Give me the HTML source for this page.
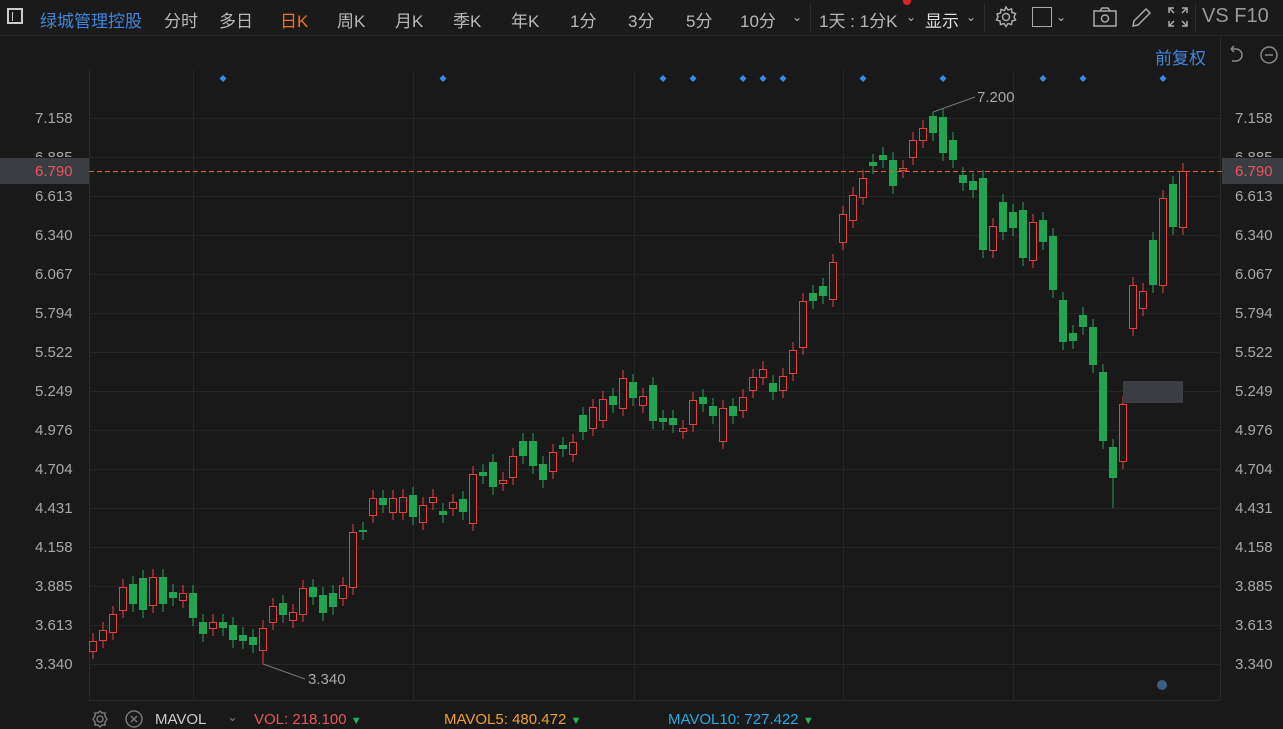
<!DOCTYPE html>
<html><head><meta charset="utf-8"><style>
body{margin:0;width:1283px;height:727px;background:#191919;overflow:hidden;font-family:"Liberation Sans","Noto Sans CJK SC",sans-serif;position:relative;color:#bbb}
.top{position:absolute;left:0;top:0;width:1283px;height:35px;border-bottom:1px solid #252525;background:#1a1a1a}
.t{position:absolute;top:7px;font-size:17px;color:#b8b8b8;white-space:nowrap}
.lbl{position:absolute;font-size:15px;color:#a8a8a8}
.sep{position:absolute;top:4px;width:1px;height:28px;background:#2c2c2c}
</style></head><body>
<div class="top">
<div style="position:absolute;left:7px;top:8px;width:16px;height:16px;border:2px solid #ccc;box-sizing:border-box"><div style="position:absolute;left:3px;top:2px;width:1px;height:9px;background:#ccc"></div></div>
<div class="t" style="left:40px;color:#3f86d8">绿城管理控股</div>
<div class="t" style="left:164px">分时</div>
<div class="t" style="left:219px">多日</div>
<div class="t" style="left:280px;color:#f07020">日K</div>
<div class="t" style="left:337px">周K</div>
<div class="t" style="left:395px">月K</div>
<div class="t" style="left:453px">季K</div>
<div class="t" style="left:511px">年K</div>
<div class="t" style="left:570px">1分</div>
<div class="t" style="left:628px">3分</div>
<div class="t" style="left:686px">5分</div>
<div class="t" style="left:740px">10分</div>
<div class="t" style="left:792px;font-size:12px;top:10px">⌄</div>
<div class="sep" style="left:810px"></div>
<div class="t" style="left:819px">1天 : 1分K</div>
<div class="t" style="left:906px;font-size:12px;top:10px">⌄</div>
<div style="position:absolute;left:903px;top:-3px;width:8px;height:8px;border-radius:50%;background:#e02030"></div>
<div class="t" style="left:925px;color:#ddd">显示</div>
<div class="t" style="left:966px;font-size:12px;top:10px">⌄</div>
<div class="sep" style="left:984px"></div>
<svg style="position:absolute;left:994px;top:5px" width="24" height="24" viewBox="0 0 24 24" fill="none" stroke="#aaa" stroke-width="1.5"><circle cx="12" cy="12" r="3.5"/><path d="M12 2l2 3 3.5-1 .5 3.5 3.5 1-1.5 3.5 1.5 3-3.5 1-.5 3.5-3.5-1-2 3-2-3-3.5 1-.5-3.5-3.5-1 1.5-3.5L3 9l3.5-1L7 4.5l3.5 1z"/></svg>
<div style="position:absolute;left:1032px;top:7px;width:20px;height:20px;border:1.5px solid #aaa;box-sizing:border-box"></div>
<div class="t" style="left:1056px;font-size:12px;top:10px">⌄</div>
<svg style="position:absolute;left:1092px;top:6px" width="26" height="22" viewBox="0 0 26 22" fill="none" stroke="#aaa" stroke-width="1.5"><rect x="2" y="5" width="22" height="15"/><path d="M8 5l2-3h6l2 3"/><circle cx="13" cy="12.5" r="3.5"/></svg>
<svg style="position:absolute;left:1129px;top:6px" width="24" height="22" viewBox="0 0 24 22" fill="none" stroke="#aaa" stroke-width="1.5"><path d="M4 20l1-5L17 3l4 4L9 19z"/></svg>
<svg style="position:absolute;left:1166px;top:6px" width="24" height="22" viewBox="0 0 24 22" fill="none" stroke="#aaa" stroke-width="1.5"><path d="M3 7V2h5M16 2h5v5M21 15v5h-5M8 20H3v-5M3 2l5 5M21 2l-5 5M21 20l-5-5M3 20l5-5"/></svg>
<div class="sep" style="left:1195px"></div>
<div class="t" style="left:1202px;font-size:20px;top:5px;color:#999">VS F10</div>
</div>
<div class="t" style="left:1155px;top:44px;color:#3f86d8">前复权</div>
<svg style="position:absolute;left:1227px;top:45px" width="52" height="20" viewBox="0 0 52 20" fill="none" stroke="#888" stroke-width="1.5"><path d="M4 4h5a6 6 0 1 1 0 12H5M4 4l3-3M4 4l3 3"/><circle cx="42" cy="10" r="8"/><path d="M38 10h8"/></svg>
<svg id="c" style="position:absolute;left:0;top:0" width="1283" height="727"></svg>
<div style="position:absolute;left:0;top:158px;width:89px;height:26px;background:#3a3e42"></div>
<div style="position:absolute;left:1222px;top:158px;width:61px;height:26px;background:#3a3e42"></div>
<div style="position:absolute;left:1123px;top:381px;width:60px;height:22px;background:#3a3e42"></div>
<div id="labels"></div>
<svg style="position:absolute;left:90px;top:709px" width="20" height="20" viewBox="0 0 20 20" fill="none" stroke="#777" stroke-width="1.5"><circle cx="10" cy="10" r="3"/><path d="M10 2l2 2h3v3l2 3-2 3v3h-3l-2 2-2-2H5v-3l-2-3 2-3V4h3z"/></svg>
<svg style="position:absolute;left:124px;top:709px" width="20" height="20" viewBox="0 0 20 20" fill="none" stroke="#777" stroke-width="1.5"><circle cx="10" cy="10" r="8"/><path d="M7 7l6 6M13 7l-6 6"/></svg>
<div class="lbl" style="left:155px;top:711px;color:#ccc">MAVOL</div>
<div class="lbl" style="left:227px;top:709px;color:#777;font-size:13px">⌄</div>
<div class="lbl" style="left:254px;top:711px;color:#e8555a">VOL: 218.100 <span style="color:#2bb05a;font-size:11px">▼</span></div>
<div class="lbl" style="left:444px;top:711px;color:#f0a030">MAVOL5: 480.472 <span style="color:#2bb05a;font-size:11px">▼</span></div>
<div class="lbl" style="left:668px;top:711px;color:#2da8e0">MAVOL10: 727.422 <span style="color:#2bb05a;font-size:11px">▼</span></div>
<script>
const svg=document.getElementById('c');let h='';
const ys=[[118,'7.158'],[157,'6.885'],[196,'6.613'],[235,'6.340'],[274,'6.067'],[313,'5.794'],[352,'5.522'],[391,'5.249'],[430,'4.976'],[469,'4.704'],[508,'4.431'],[547,'4.158'],[586,'3.885'],[625,'3.613'],[664,'3.340']];
ys.forEach(([y])=>h+=`<line x1="89" x2="1220" y1="${y+.5}" y2="${y+.5}" stroke="#262626"/>`);
[193,413,634,843,1013].forEach(x=>h+=`<line x1="${x+.5}" x2="${x+.5}" y1="70" y2="700" stroke="#262626"/>`);
h+=`<line x1="89.5" x2="89.5" y1="70" y2="700" stroke="#2a2a2a"/><line x1="1220.5" x2="1220.5" y1="36" y2="700" stroke="#2a2a2a"/><line x1="89" x2="1220" y1="700.5" y2="700.5" stroke="#2a2a2a"/>`;
let L='';
ys.forEach(([y,t])=>{if(t!=='6.885'){L+=`<div class="lbl" style="left:35px;top:${y-8}px">${t}</div><div class="lbl" style="left:1235px;top:${y-8}px">${t}</div>`}else{L+=`<div class="lbl" style="left:35px;top:${y-8}px;height:8px;overflow:hidden">${t}</div><div class="lbl" style="left:1235px;top:${y-8}px;height:8px;overflow:hidden">${t}</div>`}});
L+=`<div class="lbl" style="left:35px;top:163px;color:#f05060">6.790</div><div class="lbl" style="left:1235px;top:163px;color:#f05060">6.790</div>`;
L+=`<div class="lbl" style="left:977px;top:89px">7.200</div><div class="lbl" style="left:308px;top:671px">3.340</div>`;
document.getElementById('labels').innerHTML=L;
const d=`r641-651 r630-640 r614-632 r587-610 g584-604 g578-610 r577-605 g577-604 g592-598 r593-600 g593-618 g622-634 r622-628 g622-628 g625-640 g635-641 g637-645 r628-650 r606-622 g603-615 r612-620 r588-614 g587-597 g595-613 g593-607 r585-598 r532-587 g530-532 r498-515 g498-505 r498-512 r497-512 g495-517 r505-522 r497-502 g511-515 r502-508 g499-512 r474-523 g472-476 g462-487 r480-483 r456-477 g441-456 g441-466 g464-480 r452-471 g445-449 r442-454 g415-432 r407-428 r399-420 g396-405 r378-408 g382-398 r396-405 g385-421 g418-422 g418-425 r428-431 r400-424 g397-404 g406-416 r408-441 g406-416 r397-410 r377-390 r369-377 g383-392 r376-390 r350-373 r301-347 g293-301 g286-296 r262-299 r214-242 r195-220 r178-197 g162-166 g155-160 g160-186 r168-170 r140-157 r128-140 g116-133 g117-153 g140-160 g175-183 g181-190 g178-250 r226-250 g202-232 g212-228 g210-258 r222-260 g220-242 g236-290 g300-342 g333-341 g315-327 g327-365 g372-441 g447-478 r404-461 r285-328 r291-308 g240-285 r198-285 g184-227 r171-227`.split(' ');
d.forEach((s,i)=>{const x=93+i*10;const c=s[0]=='r'?'#e8403e':'#22a352';const [a,b]=s.slice(1).split('-').map(Number);
let hi=a-8,lo=b+8;if(i==17)lo=664;if(i==84)hi=112;if(i==102)lo=508;
h+=`<line x1="${x}" x2="${x}" y1="${hi}" y2="${lo}" stroke="${c}"/>`;
if(c[1]=='e')h+=`<rect x="${x-3.5}" y="${a+.5}" width="7" height="${Math.max(b-a,1)}" fill="#191919" stroke="${c}"/>`;
else h+=`<rect x="${x-4}" y="${a}" width="8" height="${Math.max(b-a,1)}" fill="${c}"/>`;});
h+=`<line x1="89" x2="1222" y1="171.5" y2="171.5" stroke="#d9622b" stroke-dasharray="5,3"/>`;
h+=`<line x1="933" y1="112" x2="975" y2="97" stroke="#777"/><line x1="263" y1="664" x2="305" y2="679" stroke="#777"/>`;
[223,443,663,693,743,763,783,863,943,1043,1083,1163].forEach(x=>h+=`<path d="M${x} 75l3.5 3.5-3.5 3.5-3.5-3.5z" fill="#3a8ae0"/>`);
h+=`<circle cx="1162" cy="685" r="5" fill="#4a7ab0" opacity=".7"/>`;
svg.innerHTML=h;
</script>
</body></html>
